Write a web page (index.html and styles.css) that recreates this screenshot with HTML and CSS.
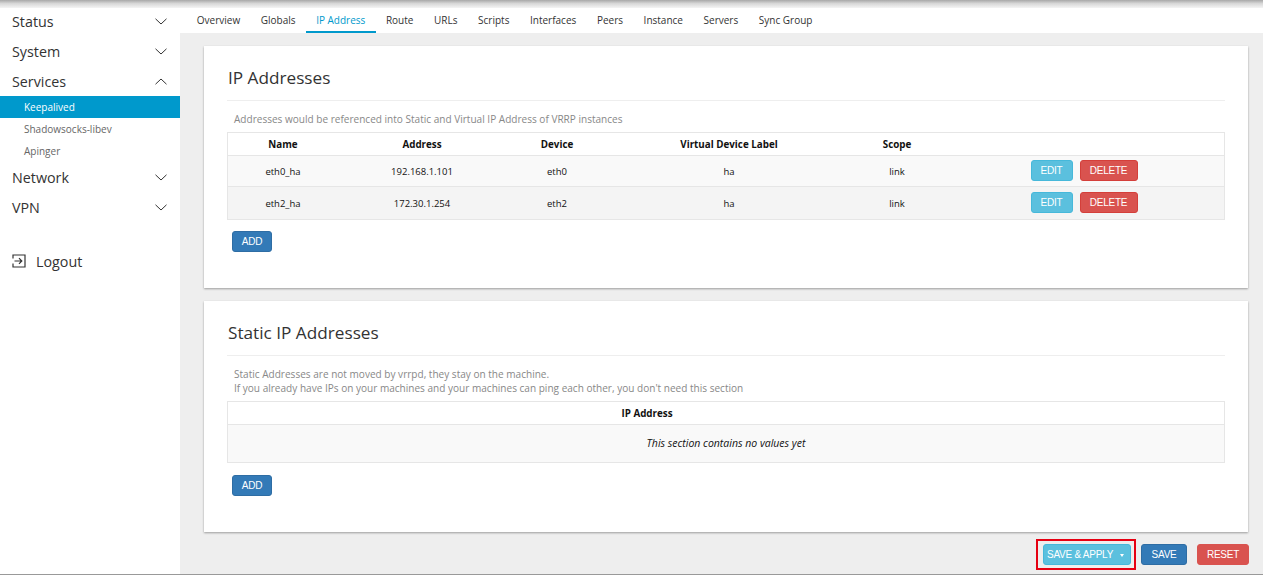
FILE: index.html
```html
<!DOCTYPE html>
<html lang="en">
<head>
    <meta charset="utf-8"/>
    <title>Keepalived - IP Address</title>
    <link rel="stylesheet" href="styles.css">
</head>
<body>
    <div class="topshade"></div>
    <div class="page">
        <nav class="sidebar">
            <a class="menu-item" href="#">Status
                <svg class="chev" viewBox="0 0 12 7"><path d="M.5.8 6 6 11.5.8"/></svg>
            </a>
            <a class="menu-item" href="#">System
                <svg class="chev" viewBox="0 0 12 7"><path d="M.5.8 6 6 11.5.8"/></svg>
            </a>
            <a class="menu-item" href="#">Services
                <svg class="chev" viewBox="0 0 12 7"><path d="M.5 6.2 6 1l5.500 5.200"/></svg>
            </a>
            <a class="sub-item active" href="#">Keepalived</a>
            <a class="sub-item" href="#">Shadowsocks-libev</a>
            <a class="sub-item" href="#">Apinger</a>
            <a class="menu-item" href="#">Network
                <svg class="chev" viewBox="0 0 12 7"><path d="M.5.8 6 6 11.5.8"/></svg>
            </a>
            <a class="menu-item" href="#">VPN
                <svg class="chev" viewBox="0 0 12 7"><path d="M.5.8 6 6 11.5.8"/></svg>
            </a>
            <a class="logout" href="#">
                <svg class="logout-icon" viewBox="0 0 14 14"><path d="M1 4.500V1h12v12H1V9.500M2.500 7h7M7 4.200 9.800 7 7 9.800"/></svg>
                Logout
            </a>
        </nav>

        <main class="main">
            <ul class="tabs">
                <li><a href="#">Overview</a></li>
                <li><a href="#">Globals</a></li>
                <li class="active"><a href="#">IP Address</a></li>
                <li><a href="#">Route</a></li>
                <li><a href="#">URLs</a></li>
                <li><a href="#">Scripts</a></li>
                <li><a href="#">Interfaces</a></li>
                <li><a href="#">Peers</a></li>
                <li><a href="#">Instance</a></li>
                <li><a href="#">Servers</a></li>
                <li><a href="#">Sync Group</a></li>
            </ul>

            <div class="content">
                <section class="card card-first">
                    <h3>IP Addresses</h3>
                    <p class="descr">Addresses would be referenced into Static and Virtual IP Address of VRRP instances</p>
                    <table>
                        <thead>
                            <tr>
                                <th class="col-name">Name</th>
                                <th class="col-addr">Address</th>
                                <th class="col-dev">Device</th>
                                <th class="col-label">Virtual Device Label</th>
                                <th class="col-scope">Scope</th>
                                <th></th>
                            </tr>
                        </thead>
                        <tbody>
                            <tr>
                                <td>eth0_ha</td>
                                <td>192.168.1.101</td>
                                <td>eth0</td>
                                <td>ha</td>
                                <td>link</td>
                                <td class="actions"><button class="btn btn-info">EDIT</button><button class="btn btn-danger">DELETE</button></td>
                            </tr>
                            <tr class="even">
                                <td>eth2_ha</td>
                                <td>172.30.1.254</td>
                                <td>eth2</td>
                                <td>ha</td>
                                <td>link</td>
                                <td class="actions"><button class="btn btn-info">EDIT</button><button class="btn btn-danger">DELETE</button></td>
                            </tr>
                        </tbody>
                    </table>
                    <button class="btn btn-primary btn-add">ADD</button>
                </section>

                <section class="card card-second">
                    <h3>Static IP Addresses</h3>
                    <p class="descr">Static Addresses are not moved by vrrpd, they stay on the machine.<br>If you already have IPs on your machines and your machines can ping each other, you don't need this section</p>
                    <table>
                        <thead>
                            <tr><th class="col-value">IP Address</th><th></th></tr>
                        </thead>
                        <tbody>
                            <tr><td class="empty" colspan="2">This section contains no values yet</td></tr>
                        </tbody>
                    </table>
                    <button class="btn btn-primary btn-add">ADD</button>
                </section>

                <div class="page-actions">
                    <div class="highlight">
                        <button class="btn btn-info btn-apply">SAVE &amp; APPLY <span class="caret"></span></button>
                    </div>
                    <button class="btn btn-primary btn-save">SAVE</button>
                    <button class="btn btn-reset">RESET</button>
                </div>
            </div>
        </main>
    </div>
    <div class="bottomline"></div>
</body>
</html>
```

FILE: styles.css
```css
html, body {
    margin: 0;
    height: 100%;
    overflow: hidden;
}

body {
    background: #eee;
    color: #222;
    font-family: "Open Sans", "Noto Sans", sans-serif;
    font-size: 10px;
    position: relative;
}

a {
    color: inherit;
    text-decoration: none;
}

/* browser chrome shadow, lies over the page */
.topshade {
    position: absolute;
    top: 0;
    left: 0;
    right: 0;
    height: 8px;
    background: linear-gradient(to bottom, #a8a8a8 0%, #d8d8d8 45%, #f4f4f4 100%);
}

.bottomline {
    position: absolute;
    bottom: 0;
    left: 0;
    right: 0;
    height: 1px;
    background: #999;
}

.page {
    display: flex;
    height: 575px;
}

.sidebar {
    width: 180px;
    flex: none;
    background: #fff;
    padding-top: 6px;
    box-sizing: border-box;
}

.menu-item {
    display: flex;
    justify-content: space-between;
    align-items: center;
    height: 30px;
    padding: 0 13px 0 12px;
    font-size: 14.300px;
    color: #333;
}

.chev {
    width: 12px;
    height: 7px;
    fill: none;
    stroke: #333;
    stroke-width: 1;
}

.sub-item {
    display: block;
    height: 22px;
    line-height: 22px;
    padding-left: 24px;
    font-size: 10px;
    color: #666;
}

.sub-item.active {
    background: #0099cc;
    color: #fff;
}

.logout {
    display: flex;
    align-items: center;
    gap: 10px;
    margin-top: 24px;
    height: 30px;
    padding: 0 12px;
    font-size: 14.300px;
    color: #333;
}

.logout-icon {
    width: 14px;
    height: 14px;
    fill: none;
    stroke: #333;
    stroke-width: 1.200;
}

.main {
    flex: 1;
    min-width: 0;
}

.tabs {
    display: flex;
    list-style: none;
    margin: 0;
    padding: 8px 0 0 6.500px;
    height: 25px;
    background: #fff;
}

.tabs a {
    display: block;
    height: 25px;
    line-height: 25px;
    padding: 0 10.300px;
    font-size: 10px;
    color: #333;
}

.tabs .active a {
    height: 23px;
    color: #0099cc;
    border-bottom: 2px solid #0099cc;
}

.content {
    padding: 13px 15px 0 24px;
}

.card {
    background: #fff;
    box-sizing: border-box;
    padding: 0 23px;
    box-shadow: 0 1px 2px rgba(0, 0, 0, .35);
}

.card-first {
    height: 242px;
    margin-bottom: 13px;
}

.card-second {
    height: 231px;
}

.card h3 {
    margin: 0;
    padding: 19px 0 0 1px;
    height: 35px;
    line-height: 25px;
    font-size: 17.200px;
    font-weight: 400;
    color: #333;
    border-bottom: 1px solid #eee;
}

.descr {
    margin: 11px 0 6px;
    padding-left: 7px;
    font-size: 10.050px;
    line-height: 14px;
    color: #888;
}

table {
    width: 998px;
    border-collapse: collapse;
    table-layout: fixed;
    border: 1px solid #e6e6e6;
    font-size: 9.500px;
    color: #111;
    text-align: center;
}

th {
    height: 22px;
    padding: 0 2px 0 0;
    font-size: 9.800px;
    font-weight: 700;
    color: #111;
}

td {
    height: 30px;
    padding: 0 2px 0 0;
    background: #f9f9f9;
    border-top: 1px solid #e6e6e6;
}

.even td {
    height: 32px;
    background: #f4f4f4;
}

.col-name { width: 110px; }
.col-addr { width: 164px; }
.col-dev { width: 102px; }
.col-label { width: 238px; }
.col-scope { width: 94px; }
.col-value { width: 838px; }

.empty {
    height: 35px;
    padding: 0 0 2px;
    font-size: 10.500px;
    font-style: italic;
}

.btn {
    border: 1px solid transparent;
    border-radius: 3px;
    color: #fff;
    font-family: "Liberation Sans", sans-serif;
    font-size: 10px;
    letter-spacing: -.25px;
    height: 21px;
    padding: 0;
    box-sizing: border-box;
}

.btn-info {
    background: #5bc0de;
    border-color: #46b8da;
}

.btn-danger {
    background: #d9534f;
    border-color: #d43f3a;
}

.btn-primary {
    background: #337ab7;
    border-color: #2e6da4;
}

.btn-reset {
    background: #d9534f;
    border-color: #d9534f;
    width: 52px;
}

.actions {
    height: 29px;
    padding-bottom: 1px;
}

.even .actions {
    height: 31px;
}

.actions .btn-info {
    width: 42px;
    margin-right: 7px;
}

.actions .btn-danger {
    width: 58px;
}

.btn-add {
    display: block;
    width: 40px;
    margin: 12px 0 0 5px;
}

.card-first .btn-add {
    margin-top: 11px;
}

.page-actions {
    display: flex;
    justify-content: flex-end;
    align-items: center;
    gap: 10px;
    margin: 7px -1px 0 0;
}

.highlight {
    border: 2px solid #e60012;
    padding: 3px 3px 3px 5px;
    margin-right: -5px;
    display: flex;
}

.btn-apply {
    width: 88px;
    text-align: left;
    padding-left: 3px;
}

.btn-save {
    width: 46px;
}

.caret {
    display: inline-block;
    margin: 0 0 1px 5px;
    border-top: 3px solid #fff;
    border-left: 2px solid transparent;
    border-right: 2px solid transparent;
}
```
